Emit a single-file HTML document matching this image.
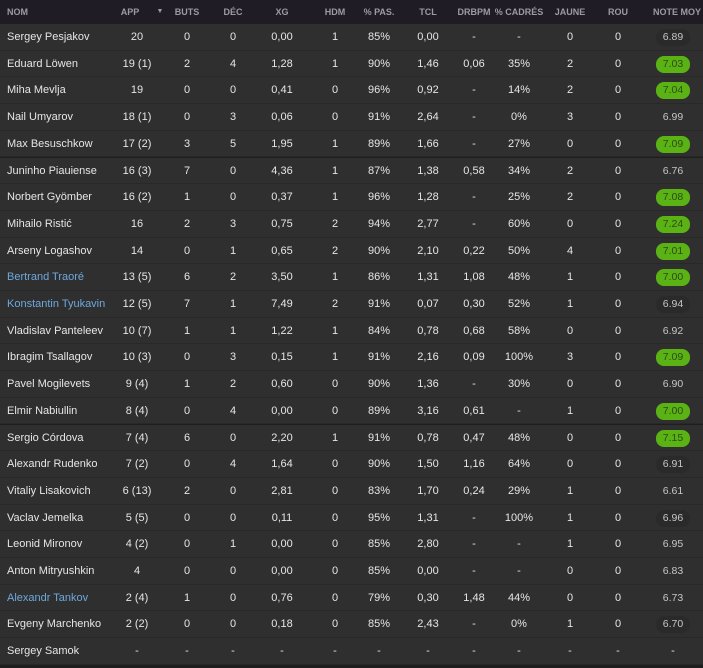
<!DOCTYPE html>
<html><head><meta charset="utf-8"><style>
body{margin:0;width:703px;height:668px;background:#1e1e1e;overflow:hidden;font-family:"Liberation Sans",sans-serif;position:relative;}
.h{position:absolute;left:0;top:0;width:703px;height:24px;background:#1f1c25;}
.h span{position:absolute;top:7px;font-size:9px;font-weight:bold;color:#9d9aa3;transform:translateX(-50%);white-space:nowrap;}
.r{position:absolute;left:0;width:703px;height:25.7px;background:#2f2f30;border-bottom:1px solid #282828;}
.r span{position:absolute;top:7px;font-size:11px;color:#e6e6e6;transform:translateX(-50%);white-space:nowrap;}
.r span:nth-child(1){left:7px;transform:none;}
.r span:nth-child(2){left:137px}.r span:nth-child(3){left:187px}.r span:nth-child(4){left:233px}.r span:nth-child(5){left:282px}.r span:nth-child(6){left:335px}.r span:nth-child(7){left:379px}.r span:nth-child(8){left:428px}.r span:nth-child(9){left:474px}.r span:nth-child(10){left:519px}.r span:nth-child(11){left:570px}.r span:nth-child(12){left:618px}.r span:nth-child(13){left:673px}
.r span.b{color:#6ea8dc;}
.bd{position:absolute;left:656px;top:5px;width:34px;height:17px;border-radius:8px;font-size:10.5px;line-height:17px;text-align:center;}
.g{background:#5bb215;color:#2b4d12;}
.y{background:#2a2a2a;color:#c6c6c6;}
.z{color:#c6c6c6;}
</style></head><body>
<div class="h">
<span style="left:7px;transform:none">NOM</span><span style="left:130px">APP</span><span style="left:160px;font-size:7px;top:8px">▼</span><span style="left:187px">BUTS</span><span style="left:233px">DÉC</span><span style="left:282px">XG</span><span style="left:335px">HDM</span><span style="left:379px">% PAS.</span><span style="left:428px">TCL</span><span style="left:474px">DRBPM</span><span style="left:519px">% CADRÉS</span><span style="left:570px">JAUNE</span><span style="left:618px">ROU</span><span style="left:677px">NOTE MOY</span>
</div>
<div class="r" style="top:24px"><span>Sergey Pesjakov</span><span>20</span><span>0</span><span>0</span><span>0,00</span><span>1</span><span>85%</span><span>0,00</span><span>-</span><span>-</span><span>0</span><span>0</span><div class="bd y">6.89</div></div>
<div class="r" style="top:50.7px"><span>Eduard Löwen</span><span>19 (1)</span><span>2</span><span>4</span><span>1,28</span><span>1</span><span>90%</span><span>1,46</span><span>0,06</span><span>35%</span><span>2</span><span>0</span><div class="bd g">7.03</div></div>
<div class="r" style="top:77.4px"><span>Miha Mevlja</span><span>19</span><span>0</span><span>0</span><span>0,41</span><span>0</span><span>96%</span><span>0,92</span><span>-</span><span>14%</span><span>2</span><span>0</span><div class="bd g">7.04</div></div>
<div class="r" style="top:104.1px"><span>Nail Umyarov</span><span>18 (1)</span><span>0</span><span>3</span><span>0,06</span><span>0</span><span>91%</span><span>2,64</span><span>-</span><span>0%</span><span>3</span><span>0</span><div class="bd z">6.99</div></div>
<div class="r" style="top:130.8px"><span>Max Besuschkow</span><span>17 (2)</span><span>3</span><span>5</span><span>1,95</span><span>1</span><span>89%</span><span>1,66</span><span>-</span><span>27%</span><span>0</span><span>0</span><div class="bd g">7.09</div></div>
<div class="r" style="top:157.5px"><span>Juninho Piauiense</span><span>16 (3)</span><span>7</span><span>0</span><span>4,36</span><span>1</span><span>87%</span><span>1,38</span><span>0,58</span><span>34%</span><span>2</span><span>0</span><div class="bd z">6.76</div></div>
<div class="r" style="top:184.2px"><span>Norbert Gyömber</span><span>16 (2)</span><span>1</span><span>0</span><span>0,37</span><span>1</span><span>96%</span><span>1,28</span><span>-</span><span>25%</span><span>2</span><span>0</span><div class="bd g">7.08</div></div>
<div class="r" style="top:210.9px"><span>Mihailo Ristić</span><span>16</span><span>2</span><span>3</span><span>0,75</span><span>2</span><span>94%</span><span>2,77</span><span>-</span><span>60%</span><span>0</span><span>0</span><div class="bd g">7.24</div></div>
<div class="r" style="top:237.6px"><span>Arseny Logashov</span><span>14</span><span>0</span><span>1</span><span>0,65</span><span>2</span><span>90%</span><span>2,10</span><span>0,22</span><span>50%</span><span>4</span><span>0</span><div class="bd g">7.01</div></div>
<div class="r" style="top:264.3px"><span class="b">Bertrand Traoré</span><span>13 (5)</span><span>6</span><span>2</span><span>3,50</span><span>1</span><span>86%</span><span>1,31</span><span>1,08</span><span>48%</span><span>1</span><span>0</span><div class="bd g">7.00</div></div>
<div class="r" style="top:291px"><span class="b">Konstantin Tyukavin</span><span>12 (5)</span><span>7</span><span>1</span><span>7,49</span><span>2</span><span>91%</span><span>0,07</span><span>0,30</span><span>52%</span><span>1</span><span>0</span><div class="bd y">6.94</div></div>
<div class="r" style="top:317.7px"><span>Vladislav Panteleev</span><span>10 (7)</span><span>1</span><span>1</span><span>1,22</span><span>1</span><span>84%</span><span>0,78</span><span>0,68</span><span>58%</span><span>0</span><span>0</span><div class="bd z">6.92</div></div>
<div class="r" style="top:344.4px"><span>Ibragim Tsallagov</span><span>10 (3)</span><span>0</span><span>3</span><span>0,15</span><span>1</span><span>91%</span><span>2,16</span><span>0,09</span><span>100%</span><span>3</span><span>0</span><div class="bd g">7.09</div></div>
<div class="r" style="top:371.1px"><span>Pavel Mogilevets</span><span>9 (4)</span><span>1</span><span>2</span><span>0,60</span><span>0</span><span>90%</span><span>1,36</span><span>-</span><span>30%</span><span>0</span><span>0</span><div class="bd z">6.90</div></div>
<div class="r" style="top:397.8px"><span>Elmir Nabiullin</span><span>8 (4)</span><span>0</span><span>4</span><span>0,00</span><span>0</span><span>89%</span><span>3,16</span><span>0,61</span><span>-</span><span>1</span><span>0</span><div class="bd g">7.00</div></div>
<div class="r" style="top:424.5px"><span>Sergio Córdova</span><span>7 (4)</span><span>6</span><span>0</span><span>2,20</span><span>1</span><span>91%</span><span>0,78</span><span>0,47</span><span>48%</span><span>0</span><span>0</span><div class="bd g">7.15</div></div>
<div class="r" style="top:451.2px"><span>Alexandr Rudenko</span><span>7 (2)</span><span>0</span><span>4</span><span>1,64</span><span>0</span><span>90%</span><span>1,50</span><span>1,16</span><span>64%</span><span>0</span><span>0</span><div class="bd y">6.91</div></div>
<div class="r" style="top:477.9px"><span>Vitaliy Lisakovich</span><span>6 (13)</span><span>2</span><span>0</span><span>2,81</span><span>0</span><span>83%</span><span>1,70</span><span>0,24</span><span>29%</span><span>1</span><span>0</span><div class="bd z">6.61</div></div>
<div class="r" style="top:504.6px"><span>Vaclav Jemelka</span><span>5 (5)</span><span>0</span><span>0</span><span>0,11</span><span>0</span><span>95%</span><span>1,31</span><span>-</span><span>100%</span><span>1</span><span>0</span><div class="bd y">6.96</div></div>
<div class="r" style="top:531.3px"><span>Leonid Mironov</span><span>4 (2)</span><span>0</span><span>1</span><span>0,00</span><span>0</span><span>85%</span><span>2,80</span><span>-</span><span>-</span><span>1</span><span>0</span><div class="bd z">6.95</div></div>
<div class="r" style="top:558px"><span>Anton Mitryushkin</span><span>4</span><span>0</span><span>0</span><span>0,00</span><span>0</span><span>85%</span><span>0,00</span><span>-</span><span>-</span><span>0</span><span>0</span><div class="bd z">6.83</div></div>
<div class="r" style="top:584.7px"><span class="b">Alexandr Tankov</span><span>2 (4)</span><span>1</span><span>0</span><span>0,76</span><span>0</span><span>79%</span><span>0,30</span><span>1,48</span><span>44%</span><span>0</span><span>0</span><div class="bd z">6.73</div></div>
<div class="r" style="top:611.4px"><span>Evgeny Marchenko</span><span>2 (2)</span><span>0</span><span>0</span><span>0,18</span><span>0</span><span>85%</span><span>2,43</span><span>-</span><span>0%</span><span>1</span><span>0</span><div class="bd y">6.70</div></div>
<div class="r" style="top:638.1px"><span>Sergey Samok</span><span>-</span><span>-</span><span>-</span><span>-</span><span>-</span><span>-</span><span>-</span><span>-</span><span>-</span><span>-</span><span>-</span><span>-</span></div>
</body></html>
